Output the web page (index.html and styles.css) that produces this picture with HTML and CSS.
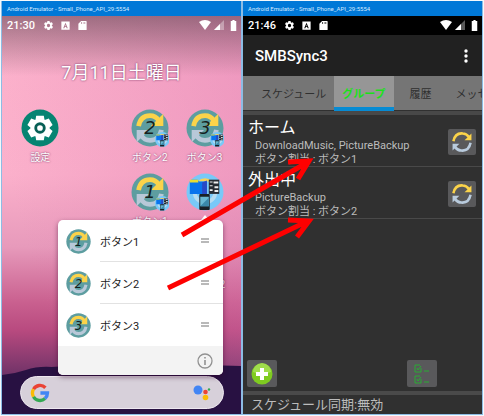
FILE: index.html
```html
<!DOCTYPE html>
<html lang="ja">
<head>
<meta charset="utf-8">
<title>SMBSync3</title>
<link rel="stylesheet" href="styles.css">
</head>
<body>
<svg class="defs" aria-hidden="true">
  <symbol id="gear" viewBox="0 0 24 24"><path fill-rule="evenodd" d="M19.4 13a7.800 7.800 0 0 0 0-2l2.100-1.600a.5.5 0 0 0 .1-.7l-2-3.400a.5.5 0 0 0-.6-.2l-2.500 1a7.500 7.500 0 0 0-1.700-1L14.400 2.400A.5.5 0 0 0 14 2h-4a.5.5 0 0 0-.5.4l-.4 2.700a7.500 7.500 0 0 0-1.700 1l-2.500-1a.5.5 0 0 0-.6.2l-2 3.400a.5.5 0 0 0 .1.7L4.600 11a7.800 7.800 0 0 0 0 2l-2.100 1.600a.5.5 0 0 0-.1.700l2 3.400c.1.200.4.300.6.200l2.500-1a7.500 7.500 0 0 0 1.700 1l.4 2.700c0 .2.200.4.500.4h4c.2 0 .4-.2.400-.4l.4-2.700a7.500 7.500 0 0 0 1.700-1l2.500 1c.2.100.5 0 .6-.2l2-3.400a.5.5 0 0 0-.1-.7ZM12 15.600a3.600 3.600 0 1 1 0-7.200 3.600 3.600 0 0 1 0 7.200Z"/></symbol>
  <symbol id="abox" viewBox="0 0 24 24"><path fill-rule="evenodd" d="M3 3h18v18H3ZM12 6 7 18h2.500l1-2.500h3l1 2.500H17ZM11.200 13.400 12 10l.9 3.400Z"/></symbol>
  <symbol id="card" viewBox="0 0 24 24"><path fill-rule="evenodd" d="M9 2h11a1 1 0 0 1 1 1v18a1 1 0 0 1-1 1H4a1 1 0 0 1-1-1V8ZM9 5v3h2V5Zm4 0v3h1V5Zm3 0v3h2V5Z"/></symbol>
  <symbol id="wifi" viewBox="0 0 12 10"><path d="M0 2Q6-2 12 2L6 10Z"/></symbol>
  <symbol id="cell" viewBox="0 0 10 10"><path d="M10 0v10H0Z" opacity=".35"/><path d="M6 4v6H0Z"/></symbol>
  <symbol id="battery" viewBox="0 0 6 10"><path d="M2 0h2v1h1.500v9H.5V1H2Z"/></symbol>
  <symbol id="yarrow" viewBox="0 0 40 40"><path d="M8 18Q10 7 20 7q6 0 9 5" fill="none" stroke="#fbd34a" stroke-width="5"/><path d="M34 5v13H21Z" fill="#fbd34a"/></symbol>
  <symbol id="sarrow" viewBox="0 0 40 40"><path d="M32 22q-2 11-12 11-6 0-9-5" fill="none" stroke="#b8c8d8" stroke-width="5"/><path d="M6 35V22h13Z" fill="#b8c8d8"/></symbol>
  <symbol id="devices" viewBox="0 0 40 40"><circle cx="20" cy="20" r="19.500" fill="#79c9f8"/><path d="M9 20a11 11 0 0 0 22 0" fill="none" stroke="#b7dcf0" stroke-width="4"/><path d="M12 9q8-7 16 0" fill="#f7d35a"/><path d="M4 9q0-2 2-2h6l2 2h8v13H4Z" fill="#0874ed"/><path d="M4 7h9v3H4Z" fill="#e8dd32"/><path d="M17 10l5-2v14h-5Z" fill="#2949c5"/><path d="M24 7h11v15H24Z" fill="#262b32"/><path d="M25 9h3v1h-3Zm4 0h5v2h-5Zm-4 4h3v1h-3Zm5 1h4v2h-4Zm-5 3h3v2h-3Zm5 1h4v2h-4Z" fill="#eee"/><rect x="14" y="22" width="11" height="17" rx="1" fill="#182026"/><path d="M15 25h9v10h-9Z" fill="#69b8d2"/><path d="m15 35 9-9v9h-9Z" fill="#3a88aa"/></symbol>
  <symbol id="badge" viewBox="0 0 40 40"><circle cx="20" cy="20" r="19.500" fill="#5d9da0"/><use href="#sarrow"/><use href="#yarrow"/></symbol>
  <symbol id="sync" viewBox="0 0 28 28"><path d="M4 13Q6 3 15 4q4 0 7 4" fill="none" stroke="#fbd34a" stroke-width="3"/><path d="M25 4v8h-8Z" fill="#fbd34a"/><path d="M24 15q-2 10-11 9-4 0-7-4" fill="none" stroke="#b9cbdd" stroke-width="3"/><path d="M3 24v-8h8Z" fill="#b9cbdd"/></symbol>
  <symbol id="check" viewBox="0 0 16 9"><path d="M6 1H1v7h6V4M3 4l1 2 3-4M10 7h5" fill="none" stroke="#2bab35" stroke-width="1"/></symbol>
</svg>

<main class="desktop">
  <section class="window">
    <header class="titlebar">Android Emulator - Small_Phone_API_29:5554</header>
    <div class="screen home">
      <svg class="hills" viewBox="0 0 240 100" preserveAspectRatio="none"><path d="M0 61Q12 60 24 56T50 53Q75 51 100 52T160 55Q210 50 240 52V100H0Z" fill="#281142"/></svg>
      <div class="status">
        <span class="clock">21:30</span>
        <svg class="s-icon"><use href="#gear"/></svg><svg class="s-icon"><use href="#abox"/></svg><svg class="s-icon"><use href="#card"/></svg>
        <span class="signals"><svg class="wifi"><use href="#wifi"/></svg><svg class="cell"><use href="#cell"/></svg><svg class="battery"><use href="#battery"/></svg></span>
      </div>
      <h1 class="date">7月11日土曜日</h1>
      <div class="apps">
        <a class="app" href="#"><svg class="app-icon" viewBox="0 0 40 40"><circle cx="20" cy="20" r="19.500" fill="#068472"/><g fill="#fff"><circle cx="20" cy="20" r="10"/><path id="tooth" d="M16 7h8l1 6H15ZM16 33h8l1-6H15Z"/><use href="#tooth" transform="rotate(60 20 20)"/><use href="#tooth" transform="rotate(120 20 20)"/></g><circle cx="20" cy="20" r="4.500" fill="#fff" stroke="#075f55" stroke-width="3"/></svg><span>設定</span></a>
        <a class="app third" href="#"><svg class="app-icon" viewBox="0 0 40 40"><use href="#badge"/><text class="num" x="20" y="26">2</text><use href="#devices" x="25" y="24" width="16" height="16"/></svg><span>ボタン2</span></a>
        <a class="app" href="#"><svg class="app-icon" viewBox="0 0 40 40"><use href="#badge"/><text class="num" x="20" y="26">3</text><use href="#devices" x="25" y="24" width="16" height="16"/></svg><span>ボタン3</span></a>
        <a class="app third" href="#"><svg class="app-icon" viewBox="0 0 40 40"><use href="#badge"/><text class="num" x="20" y="26">1</text><use href="#devices" x="25" y="24" width="16" height="16"/></svg><span>ボタン1</span></a>
        <a class="app" href="#" aria-label="SMBSync3"><svg class="app-icon"><use href="#devices"/></svg><svg class="peak" viewBox="0 0 8 6"><path d="M0 6 4 1l4 5Z" fill="#fff"/></svg></a>
        <span class="edge">2</span>
      </div>
      <div class="search">
        <svg class="google" viewBox="0 0 24 24"><g fill="none" stroke-width="4"><path d="M4.200 7.500a9 9 0 0 1 14.300-1.800" stroke="#ea4335"/><path d="M4.200 16.500a9 9 0 0 1 0-9" stroke="#fbbc05"/><path d="M18 18.700A9 9 0 0 1 4.200 16.500" stroke="#34a853"/><path d="M12.500 12H21q0 4-3 6.700" stroke="#4285f4"/></g></svg>
        <svg class="assistant" viewBox="0 0 18 18"><circle cx="5" cy="6" r="4.500" fill="#4285f4"/><circle cx="12.500" cy="8" r="2.300" fill="#ea4335"/><circle cx="12.500" cy="13.500" r="2.800" fill="#fbbc05"/><circle cx="16" cy="5.500" r="1.200" fill="#34a853"/></svg>
      </div>
      <div class="popup">
        <button class="shortcut"><svg class="short-icon" viewBox="0 0 40 40"><use href="#badge"/><text class="num" x="20" y="27">1</text></svg><span class="label">ボタン1<i class="grip"></i></span></button>
        <button class="shortcut"><svg class="short-icon" viewBox="0 0 40 40"><use href="#badge"/><text class="num" x="20" y="27">2</text></svg><span class="label">ボタン2<i class="grip"></i></span></button>
        <button class="shortcut"><svg class="short-icon" viewBox="0 0 40 40"><use href="#badge"/><text class="num" x="20" y="27">3</text></svg><span class="label">ボタン3<i class="grip"></i></span></button>
        <div class="popup-foot"><button class="info" aria-label="情報"><svg viewBox="0 0 16 16"><circle cx="8" cy="8" r="7" fill="none" stroke="#929292" stroke-width="1.300"/><path d="M7.200 7h1.600v5H7.200Zm0-3h1.600v1.600H7.200Z" fill="#929292"/></svg></button></div>
      </div>
    </div>
  </section>

  <section class="window">
    <header class="titlebar">Android Emulator - Small_Phone_API_29:5554</header>
    <div class="screen sync-app">
      <div class="status black">
        <span class="clock">21:46</span>
        <svg class="s-icon"><use href="#gear"/></svg><svg class="s-icon"><use href="#abox"/></svg><svg class="s-icon"><use href="#card"/></svg>
        <span class="signals"><svg class="wifi"><use href="#wifi"/></svg><svg class="cell"><use href="#cell"/></svg><svg class="battery"><use href="#battery"/></svg></span>
      </div>
      <div class="appbar"><h2>SMBSync3</h2><button class="more" aria-label="メニュー"><svg viewBox="0 0 4 14"><circle cx="2" cy="2" r="1.700"/><circle cx="2" cy="7" r="1.700"/><circle cx="2" cy="12" r="1.700"/></svg></button></div>
      <nav class="tabs"><button class="tab first">スケジュール</button><button class="tab active">グループ</button><button class="tab">履歴</button><button class="tab">メッセージ</button></nav>
      <ul class="groups">
        <li class="group"><div><h3>ホーム</h3><p>DownloadMusic, PictureBackup</p><p>ボタン割当 : ボタン1</p></div><button class="tile" aria-label="同期"><svg><use href="#sync"/></svg></button></li>
        <li class="group"><div><h3>外出中</h3><p>PictureBackup</p><p>ボタン割当 : ボタン2</p></div><button class="tile" aria-label="同期"><svg><use href="#sync"/></svg></button></li>
      </ul>
      <div class="actions">
        <button class="tool" aria-label="追加"><svg class="plus" viewBox="0 0 22 22"><circle cx="11" cy="11" r="10.500" fill="#7fcb20"/><path d="M2 9a9 9 0 0 1 18 0Q11 13 2 9" fill="#a0dd4c"/><path d="M9 5h4v4h4v4h-4v4H9v-4H5V9h4Z" fill="#fff"/></svg></button>
        <button class="tool" aria-label="すべて選択"><svg class="checks" viewBox="0 0 16 20"><use href="#check" width="16" height="9"/><use href="#check" y="11" width="16" height="9"/></svg></button>
      </div>
      <footer class="schedule">スケジュール同期:無効</footer>
    </div>
  </section>
  <svg class="arrows" viewBox="0 0 484 416"><path d="M182 235 308 162M168 288 308 221M288 162 309 161 298 179M288 220 309 221 297 237"/></svg>
</main>
</body>
</html>
```
FILE: styles.css
```css
* { box-sizing: border-box; }
body {
  margin: 0;
  background: #f4f9fc;
  font-family: Roboto, "Noto Sans CJK JP", sans-serif;
}
h1, h2, h3, p, ul { margin: 0; padding: 0; font-weight: 400; }
button { border: 0; padding: 0; background: none; color: inherit; font: inherit; }
a { color: inherit; text-decoration: none; }
svg { display: block; fill: currentColor; }
.defs { position: absolute; width: 0; height: 0; }

.desktop {
  position: relative;
  display: grid;
  grid-template-columns: 1fr 1fr;
  min-height: 100vh;
  padding: 1px;
}
.window {
  display: flex;
  flex-direction: column;
  min-width: 0;
  border: 1px solid #8dbce4;
  border-top: 0;
}
.titlebar {
  height: 15px;
  padding-left: 5px;
  background: #0078d7;
  color: #d5eaff;
  font: 6px/15px Roboto, sans-serif;
  white-space: nowrap;
}
.screen { position: relative; display: flex; flex: 1; flex-direction: column; }
.status {
  display: flex;
  align-items: center;
  gap: 6px;
  height: 19px;
  padding: 0 4px 0 5px;
  color: #fff;
}
.black { background: #000; }
.clock { margin-right: 2px; font-size: 11px; font-weight: 500; }
.s-icon { width: 11px; height: 11px; }
.signals { display: flex; gap: 3px; margin-left: auto; }
.wifi { width: 12px; height: 10px; }
.cell { width: 10px; height: 10px; }
.battery { width: 7px; height: 11px; margin-left: 3px; }

.home {
  background:
    linear-gradient(180deg, rgba(70, 50, 60, .5), rgba(70, 50, 60, 0) 60px),
    linear-gradient(255deg, rgba(215, 110, 170, .4), rgba(215, 110, 170, 0) 80%),
    linear-gradient(180deg, #feb5cd 0, #fbb0cb 40%, #e79abb 58%, #c9608f 72%, #b84a7f 79%, #713368 90%);
}
.hills { position: absolute; bottom: 0; left: 0; width: 100%; height: 100px; }
.date {
  margin-top: 24px;
  color: #fff;
  font-size: 18px;
  line-height: 28px;
  text-align: center;
  text-shadow: 0 0 2px #625;
}
.apps {
  display: grid;
  grid-template-columns: repeat(4, 1fr);
  grid-auto-rows: 64px;
  margin-top: 22px;
  padding: 0 9px 0 11px;
}
.app { display: flex; flex-direction: column; align-items: center; gap: 3px; }
.third { grid-column: 3; }
.app-icon { flex: none; width: 38px; height: 38px; }
.app span, .edge {
  color: #fff;
  font-size: 10px;
  line-height: 16px;
  text-shadow: 0 0 2px #625;
}
.edge { grid-column: 4; align-self: end; justify-self: end; padding: 0 7px 8px 0; }
.peak { width: 8px; height: 6px; }
.num { fill: #161f20; font: italic 19px "DejaVu Sans", sans-serif; text-anchor: middle; }
.search {
  position: relative;
  display: flex;
  align-items: center;
  justify-content: space-between;
  height: 33px;
  margin: auto 17px 5px 18px;
  padding: 0 12px 0 9px;
  border: 1px solid #eee8f0;
  border-radius: 17px;
  background: #d7d0da;
}
.google { width: 20px; height: 20px; }
.assistant { width: 18px; height: 18px; }
.popup {
  position: absolute;
  top: 204px;
  right: 18px;
  left: 56px;
  overflow: hidden;
  border-radius: 5px;
  background: #fff;
  box-shadow: 0 2px 5px rgba(50, 0, 40, .5);
}
.shortcut {
  display: flex;
  align-items: center;
  gap: 9px;
  width: 100%;
  height: 42px;
  padding-left: 8px;
  color: #222;
  font-size: 11px;
}
.short-icon { width: 25px; height: 25px; }
.label {
  display: flex;
  flex: 1;
  align-items: center;
  justify-content: space-between;
  height: 42px;
  padding-right: 14px;
  border-bottom: 1px solid #e2e2e2;
}
.shortcut:nth-child(3) .label { border-color: transparent; }
.grip { width: 8px; height: 5px; border: solid #b9b9b9; border-width: 2px 0; }
.popup-foot {
  display: flex;
  align-items: center;
  justify-content: flex-end;
  height: 29px;
  padding-right: 10px;
  background: #f3f3f3;
}
.info svg { width: 16px; height: 16px; }

.sync-app { min-width: 0; background: #303030; color: #bcbcbc; }
.appbar {
  display: flex;
  align-items: center;
  justify-content: space-between;
  height: 41px;
  padding: 0 14px 0 12px;
  background: #212121;
  color: #fff;
}
.appbar h2 { font-size: 15px; font-weight: 500; }
.more svg { width: 4px; height: 14px; }
.tabs {
  display: flex;
  height: 39px;
  overflow: hidden;
  border-bottom: 4px solid #484848;
  background: #757575;
}
.tab {
  flex: none;
  height: 35px;
  padding: 0 8px 0 16px;
  border-bottom: 1px solid #303030;
  color: #303030;
  font-size: 11px;
  white-space: nowrap;
}
.first { padding: 0 8px 0 18px; }
.active {
  padding: 3px 8px 0;
  border-bottom: 4px solid #078bd3;
  background: #969696;
  color: #1be11b;
  font-weight: 700;
}
.groups { list-style: none; }
.group {
  display: flex;
  align-items: center;
  justify-content: space-between;
  height: 52px;
  padding: 2px 6px 0 5px;
  border-bottom: 1px solid #494949;
}
.group h3 { color: #fff; font-size: 16px; line-height: 22px; }
.group p { padding-left: 7px; font-size: 11px; line-height: 14px; }
.tile, .tool {
  display: grid;
  place-items: center;
  border-radius: 2px;
  background: #59595b;
}
.tile { width: 28px; height: 26px; }
.tile svg { width: 24px; height: 24px; }
.actions {
  display: grid;
  grid-template-columns: 68% 1fr;
  margin-top: auto;
  padding: 0 0 4px 4px;
}
.tool { width: 30px; height: 27px; }
.plus { width: 22px; height: 22px; }
.checks { width: 16px; height: 20px; }
.schedule {
  height: 23px;
  padding-left: 8px;
  border-top: 4px solid #4a4a4a;
  font-size: 13px;
  line-height: 19px;
}
.arrows {
  position: absolute;
  top: 0;
  left: 0;
  width: 100%;
  height: auto;
  fill: none;
  stroke: #fe0000;
  stroke-width: 5;
  pointer-events: none;
}
```
